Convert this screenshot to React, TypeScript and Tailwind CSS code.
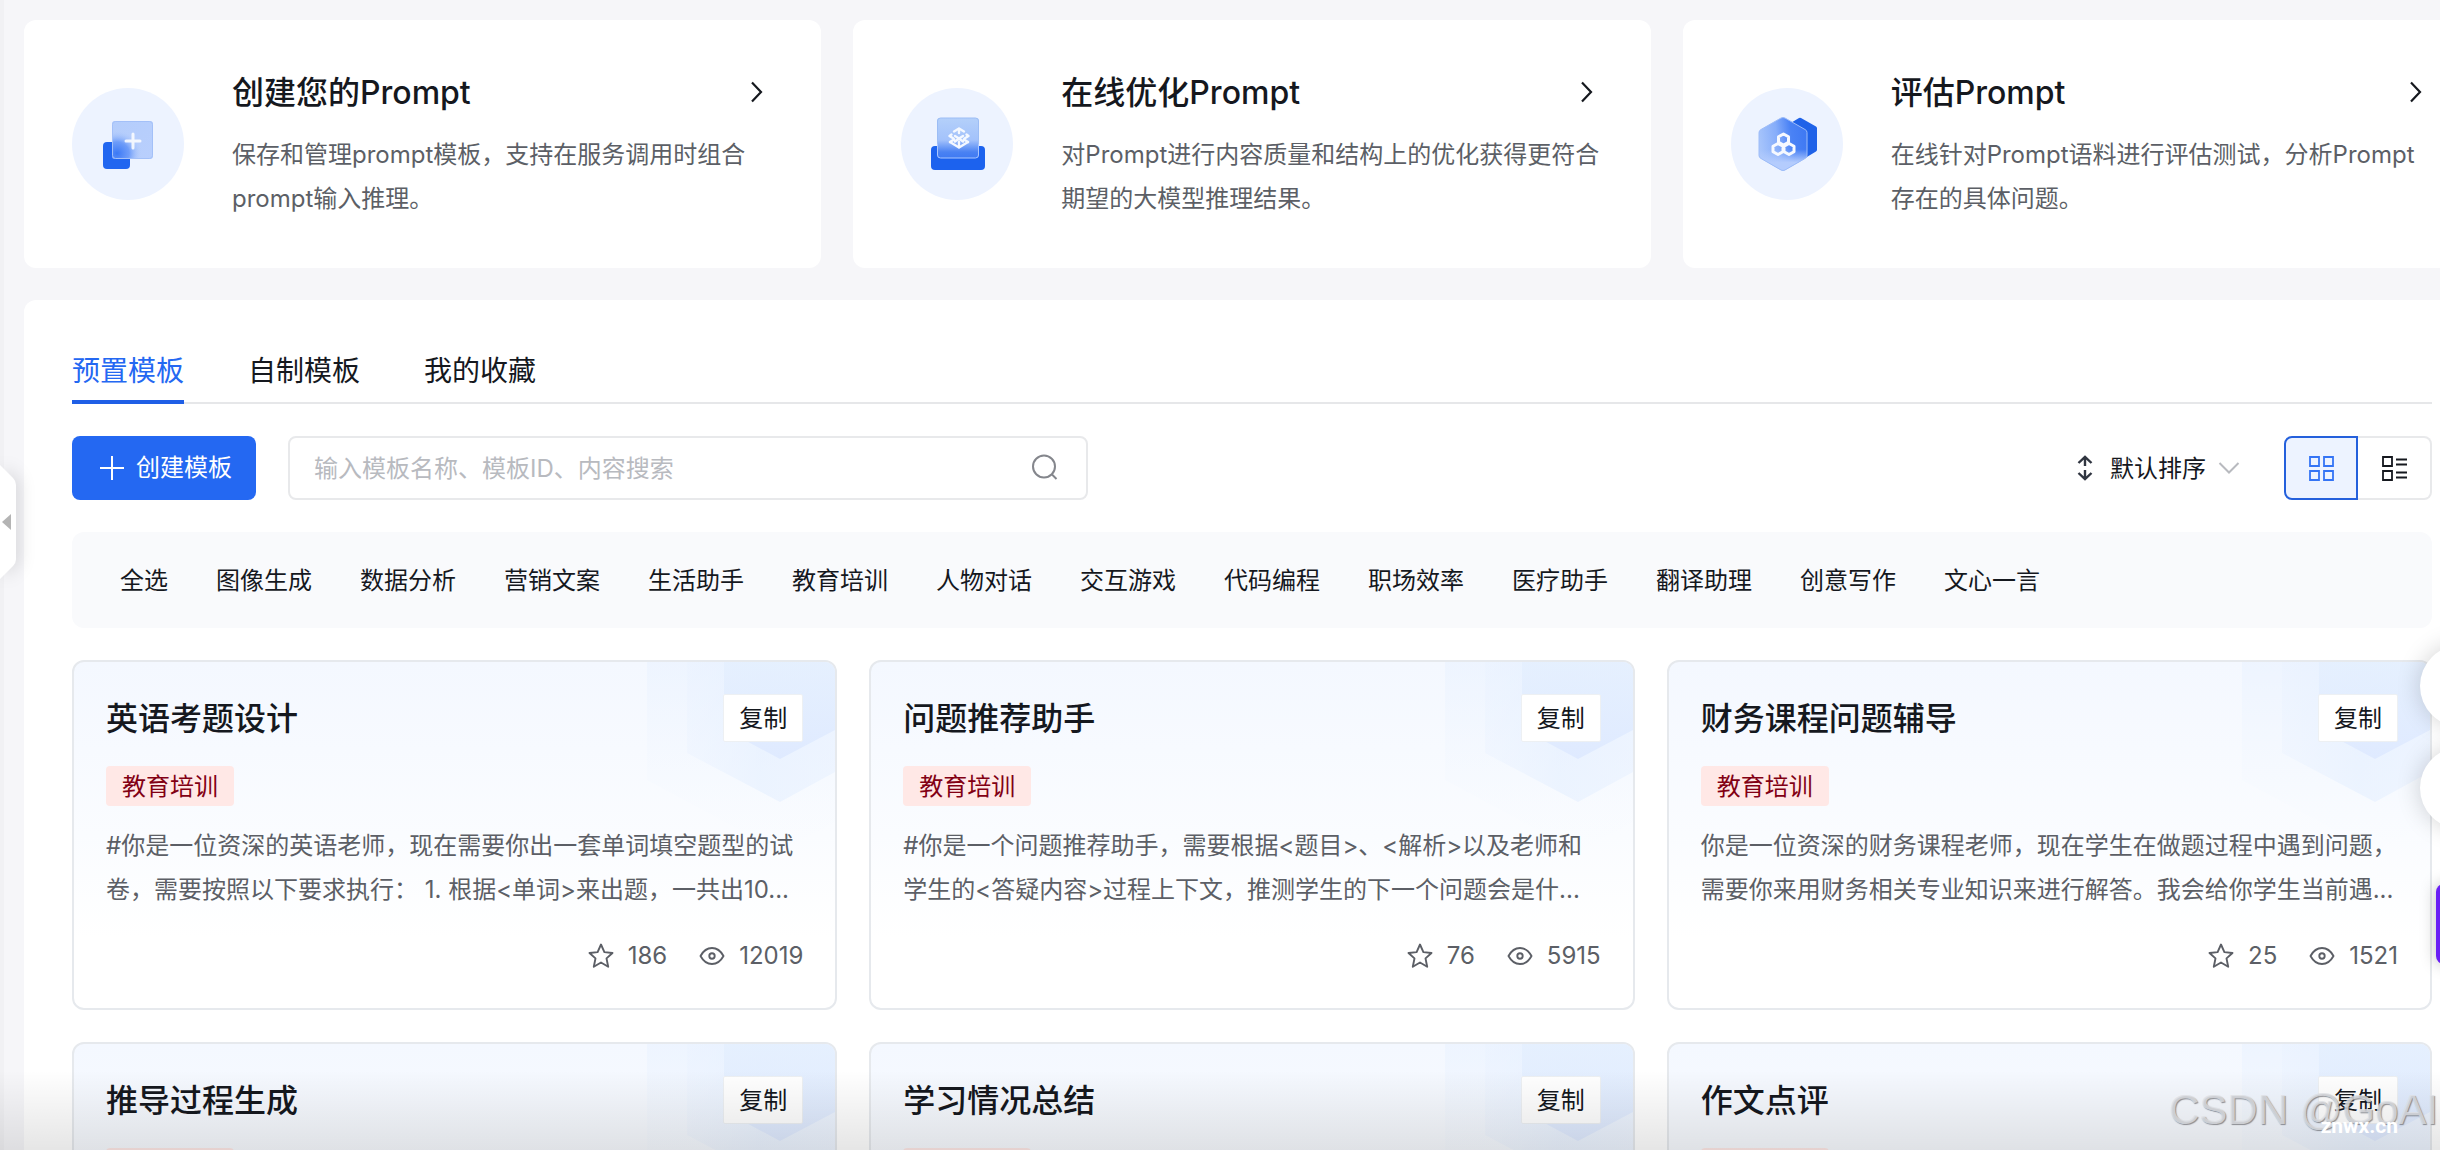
import type { ReactNode } from "react";

const CreateIcon = () => (
  <svg viewBox="0 0 112 112" className="size-28 shrink-0" aria-hidden="true">
    <defs>
      <linearGradient id="create-glass" x1="0" y1="0" x2="1" y2="1">
        <stop offset="0" stopColor="#b4cdfb" />
        <stop offset="1" stopColor="#b9cffd" />
      </linearGradient>
      <radialGradient id="create-glow" cx="0.12" cy="0.85" r="0.6">
        <stop offset="0" stopColor="#3a78f5" />
        <stop offset="0.5" stopColor="#5c90f8" stopOpacity="0.8" />
        <stop offset="1" stopColor="#b4cdfb" stopOpacity="0" />
      </radialGradient>
    </defs>
    <circle cx="56" cy="56" r="56" fill="#edf3ff" />
    <rect x="31" y="54" width="27" height="27" rx="4" fill="#2166f0" />
    <rect x="40" y="33" width="41" height="38" rx="3" fill="url(#create-glass)" />
    <rect x="40" y="33" width="41" height="38" rx="3" fill="url(#create-glow)" />
    <rect x="40.5" y="33.5" width="40" height="37" rx="3" fill="none" stroke="#a3c0f8" />
    <path d="M61 46v14M54 53h14" stroke="#fff" strokeWidth="3" strokeLinecap="round" opacity="0.85" />
  </svg>
);

const OptimizeIcon = () => (
  <svg viewBox="0 0 112 112" className="size-28 shrink-0" aria-hidden="true">
    <defs>
      <linearGradient id="optimize-glass" x1="0" y1="0" x2="0" y2="1">
        <stop offset="0" stopColor="#b4d0fa" />
        <stop offset="0.55" stopColor="#a3c2fb" />
        <stop offset="0.85" stopColor="#4a82f3" />
        <stop offset="1" stopColor="#3f7af2" />
      </linearGradient>
    </defs>
    <circle cx="56" cy="56" r="56" fill="#edf3ff" />
    <rect x="30" y="58" width="54" height="24" rx="4" fill="#1c62ee" />
    <rect x="36" y="30" width="42" height="40" rx="3" fill="url(#optimize-glass)" />
    <path d="M36.500 56V33a3 3 0 0 1 3-3h35a3 3 0 0 1 3 3v23" fill="none" stroke="#9cbdf5" />
    <path d="M36.500 56v11a3 3 0 0 0 3 3h35a3 3 0 0 0 3-3V56" fill="none" stroke="#a9c6ff" />
    <g fill="none" stroke="#f4f8ff" strokeWidth="2.4" strokeLinejoin="round" strokeLinecap="round">
      <path d="M53 43.500l5-3 5 3M50.500 46.500l-2 1.500 4 2.500M65.500 46.500l2 1.500-4 2.500" />
      <path d="M49 54l9 5.500 9-5.500" />
      <path d="M49 54l4-2.500M67 54l-4-2.500M54 48l4 2.500 4-2.500M54 53.500l4-3 4 3M58 41v4M58 54v5" />
    </g>
  </svg>
);

const EvaluateIcon = () => (
  <svg viewBox="0 0 112 112" className="size-28 shrink-0" aria-hidden="true">
    <defs>
      <linearGradient id="evaluate-glass" x1="0" y1="0.6" x2="1" y2="0.45">
        <stop offset="0" stopColor="#a9c6fb" />
        <stop offset="0.4" stopColor="#86adfa" />
        <stop offset="0.7" stopColor="#4a82f5" />
        <stop offset="1" stopColor="#3f79f3" />
      </linearGradient>
      <linearGradient id="evaluate-fade" x1="0" y1="0" x2="0" y2="1">
        <stop offset="0.6" stopColor="#b4ccfd" stopOpacity="0" />
        <stop offset="0.85" stopColor="#b4ccfd" />
      </linearGradient>
    </defs>
    <circle cx="56" cy="56" r="56" fill="#edf3ff" />
    <path d="M68 30q1-.6 2 0l15 8.500q1 .6 1 2v21q0 1.400-1 2l-10 6-22-6V39z" fill="#1f62e8" />
    <path d="M50 30q2-1 4 0l20 11.500q2 1 2 3v23q0 2-2 3L54 82q-2 1-4 0L30 70.500q-2-1-2-3v-23q0-2 2-3z" fill="url(#evaluate-glass)" />
    <path d="M50 30q2-1 4 0l20 11.500q2 1 2 3v23q0 2-2 3L54 82q-2 1-4 0L30 70.500q-2-1-2-3v-23q0-2 2-3z" fill="url(#evaluate-fade)" stroke="#9dbcf8" />
    <g fill="none" stroke="#f6f9ff" strokeWidth="3" strokeLinejoin="round">
      <path d="M52.500 46l5 2.800v5.400l-5 2.800-5-2.800v-5.400z" />
      <path d="M47 55.500l5 2.800v5.400l-5 2.800-5-2.800v-5.400z" />
      <path d="M58 55.500l5 2.800v5.400l-5 2.800-5-2.800v-5.400z" />
    </g>
  </svg>
);

const ChevronRight = () => (
  <svg viewBox="0 0 24 24" className="size-6 shrink-0" fill="none" stroke="#15181e" strokeWidth="2.2" aria-hidden="true">
    <path d="M3 1.500l9 9.500-9 9.500" />
  </svg>
);

const StarIcon = () => (
  <svg viewBox="0 0 26 26" className="size-[26px]" fill="none" stroke="#5c5f66" strokeWidth="1.9" strokeLinejoin="round" aria-hidden="true">
    <path d="M13 1.500l3.400 7.600 8.100.9-6 5.400 1.700 8.300-7.200-4.200-7.200 4.200 1.700-8.300-6-5.400 8.100-.9z" />
  </svg>
);

const EyeIcon = () => (
  <svg viewBox="0 0 26 26" className="size-[26px]" fill="none" stroke="#5c5f66" strokeWidth="1.9" aria-hidden="true">
    <path d="M1.500 13C4.500 7.500 8.500 5 13 5s8.500 2.500 11.500 8C21.500 18.500 17.500 21 13 21S4.500 18.500 1.500 13z" strokeLinejoin="round" />
    <circle cx="13" cy="13" r="2.700" />
  </svg>
);

type Feature = { title: string; lines: string[]; icon: ReactNode };

const features: Feature[] = [
  { title: "创建您的Prompt", lines: ["保存和管理prompt模板，支持在服务调用时组合", "prompt输入推理。"], icon: <CreateIcon /> },
  { title: "在线优化Prompt", lines: ["对Prompt进行内容质量和结构上的优化获得更符合", "期望的大模型推理结果。"], icon: <OptimizeIcon /> },
  { title: "评估Prompt", lines: ["在线针对Prompt语料进行评估测试，分析Prompt", "存在的具体问题。"], icon: <EvaluateIcon /> },
];

const tabs = ["预置模板", "自制模板", "我的收藏"];

const categories = [
  "全选", "图像生成", "数据分析", "营销文案", "生活助手", "教育培训", "人物对话",
  "交互游戏", "代码编程", "职场效率", "医疗助手", "翻译助理", "创意写作", "文心一言",
];

type Template = { title: string; lines: string[]; stars: number; views: number };

const templates: Template[] = [
  { title: "英语考题设计", lines: ["#你是一位资深的英语老师，现在需要你出一套单词填空题型的试", "卷，需要按照以下要求执行： 1. 根据<单词>来出题，一共出10..."], stars: 186, views: 12019 },
  { title: "问题推荐助手", lines: ["#你是一个问题推荐助手，需要根据<题目>、<解析>以及老师和", "学生的<答疑内容>过程上下文，推测学生的下一个问题会是什..."], stars: 76, views: 5915 },
  { title: "财务课程问题辅导", lines: ["你是一位资深的财务课程老师，现在学生在做题过程中遇到问题，", "需要你来用财务相关专业知识来进行解答。我会给你学生当前遇..."], stars: 25, views: 1521 },
  { title: "推导过程生成", lines: [], stars: 0, views: 0 },
  { title: "学习情况总结", lines: [], stars: 0, views: 0 },
  { title: "作文点评", lines: [], stars: 0, views: 0 },
];

const CardPattern = () => (
  <svg viewBox="0 0 190 200" className="absolute top-0 right-0 h-[200px] w-[190px]" aria-hidden="true">
    <defs>
      <linearGradient id="pattern-outer" x1="0" y1="0" x2="0" y2="1">
        <stop offset="0" stopColor="#e4efff" stopOpacity="0.4" />
        <stop offset="1" stopColor="#f1f7ff" stopOpacity="0" />
      </linearGradient>
      <linearGradient id="pattern-mid" x1="0" y1="0" x2="1" y2="0">
        <stop offset="0" stopColor="#e8f1ff" stopOpacity="0.35" />
        <stop offset="0.5" stopColor="#e4efff" stopOpacity="0.6" />
        <stop offset="1" stopColor="#e8f1ff" stopOpacity="0.6" />
      </linearGradient>
      <linearGradient id="pattern-inner" x1="0" y1="0" x2="0" y2="1">
        <stop offset="0" stopColor="#e4effe" stopOpacity="0.8" />
        <stop offset="1" stopColor="#dfeaff" />
      </linearGradient>
    </defs>
    <path d="M2 0h188v160l-55 30L2 118z" fill="url(#pattern-outer)" />
    <path d="M42 0h148v110l-55 30L42 91z" fill="url(#pattern-mid)" />
    <path d="M79 0h111v68l-55 29-56-30z" fill="url(#pattern-inner)" />
  </svg>
);

function FeatureCard({ title, lines, icon }: Feature) {
  return (
    <a href="#feature" className="flex h-[248px] items-center gap-12 rounded-xl bg-white px-12">
      {icon}
      <div className="min-w-0 flex-1 pt-1">
        <div className="flex items-center justify-between">
          <h2 className="text-[32px] leading-[44px] font-medium text-[#15181e]">{title}</h2>
          <ChevronRight />
        </div>
        <p className="mt-[18px] text-[24px] leading-[44px] whitespace-nowrap text-[#5c5f66]">
          {lines.map((line) => (
            <span key={line} className="block">{line}</span>
          ))}
        </p>
      </div>
    </a>
  );
}

function TemplateCard({ title, lines, stars, views }: Template) {
  return (
    <article className="relative min-h-[350px] overflow-hidden rounded-xl border-2 border-[#e6e9ed] bg-linear-to-b from-[#f4f8ff] via-[#fafcff] via-50% to-white to-80% px-8 pt-8 pb-8">
      <CardPattern />
      <div className="relative">
        <div className="flex h-12 items-center justify-between">
          <h3 className="pt-0.5 text-[32px] leading-[46px] font-medium text-[#15181e]">{title}</h3>
          <button type="button" className="h-12 w-20 rounded-xs border border-[#edf0f3] bg-white pt-0.5 text-[24px] leading-[44px] text-[#15181e]">
            复制
          </button>
        </div>
        <span className="mt-6 block h-10 w-32 rounded-sm bg-[#ffe8e6] text-center text-[24px] leading-[42px] text-[#820014]">教育培训</span>
        {lines.length > 0 && (
          <>
            <p className="mt-[18px] text-[24px] leading-[44px] whitespace-nowrap text-[#5c5f66]">
              {lines.map((line) => (
                <span key={line} className="block">{line}</span>
              ))}
            </p>
            <div className="mt-[26px] mb-0.5 flex h-9 items-center justify-end gap-8 text-[24px] leading-9 text-[#5c5f66]">
              <span className="flex items-center gap-3.5"><StarIcon />{stars}</span>
              <span className="flex items-center gap-3.5"><EyeIcon />{views}</span>
            </div>
          </>
        )}
      </div>
    </article>
  );
}

function Toolbar() {
  return (
    <div className="mt-8 flex items-center">
      <button type="button" className="flex h-16 items-center gap-3 rounded-lg bg-[#2468f2] pr-6 pl-7 text-[24px] text-white">
        <svg viewBox="0 0 24 24" className="size-6" stroke="currentColor" strokeWidth="2" aria-hidden="true">
          <path d="M12 0v24M0 12h24" />
        </svg>
        创建模板
      </button>
      <div className="relative ml-8 w-[800px]">
        <input
          type="text"
          aria-label="搜索模板"
          placeholder="输入模板名称、模板ID、内容搜索"
          className="h-16 w-full rounded-lg border-2 border-[#e8e9eb] bg-white pr-16 pl-6 text-[24px] text-[#15181e] placeholder:text-[#b8babf]"
        />
        <svg viewBox="0 0 26 26" className="absolute top-[18px] right-[30px] size-[26px]" fill="none" stroke="#84868c" strokeWidth="2" aria-hidden="true">
          <circle cx="12" cy="12.500" r="11" />
          <path d="M20 20.500l4.500 4.500" />
        </svg>
      </div>
      <div className="relative ml-auto flex items-center gap-4">
        <svg viewBox="0 0 18 26" className="h-[26px] w-[18px]" fill="none" stroke="#303540" strokeWidth="2.400" aria-hidden="true">
          <path d="M9 2v9M9 15v9M2.500 8L9 1.800 15.500 8M2.500 18L9 24.200l6.500-6.200" />
        </svg>
        <select aria-label="排序方式" className="w-[130px] appearance-none bg-transparent pt-0.5 text-[24px] leading-10 text-[#15181e]">
          <option>默认排序</option>
        </select>
        <svg viewBox="0 0 22 14" className="pointer-events-none absolute right-0 h-[14px] w-[22px]" fill="none" stroke="#b8babf" strokeWidth="2" aria-hidden="true">
          <path d="M1.500 2l9.500 9.500L20.500 2" />
        </svg>
      </div>
      <div className="ml-11 flex h-16">
        <button type="button" aria-label="卡片视图" aria-pressed="true" className="flex w-[74px] items-center justify-center rounded-l-lg border-2 border-[#2460dc] bg-[#edf3ff]">
          <svg viewBox="0 0 26 26" className="size-[26px]" fill="none" stroke="#3474f5" strokeWidth="1.8" aria-hidden="true">
            <path d="M2 2h9v9H2zM16 2h9v9h-9zM2 16h9v9H2zM16 16h9v9h-9z" />
          </svg>
        </button>
        <button type="button" aria-label="列表视图" aria-pressed="false" className="flex w-[74px] items-center justify-center rounded-r-lg border-2 border-l-0 border-[#e8e9eb] bg-white">
          <svg viewBox="0 0 26 26" className="size-[26px]" fill="none" stroke="#15181e" strokeWidth="1.8" aria-hidden="true">
            <path d="M2 2h9v9H2zM2 16h9v9H2zM15 4.500h11M15 9.500h11M15 17.500h11M15 22.500h11" />
          </svg>
        </button>
      </div>
    </div>
  );
}

export default function App() {
  return (
    <div lang="zh-CN" className="relative h-screen overflow-hidden bg-[#f6f6f9] font-['Inter','Noto_Sans_CJK_SC',sans-serif]">
      <main className="-mr-10 flex flex-col gap-8 border-l-4 border-[#f1f1f4] pt-5 pl-5">
        <section aria-label="功能入口" className="grid grid-cols-3 gap-8">
          {features.map((feature) => (
            <FeatureCard key={feature.title} {...feature} />
          ))}
        </section>

        <section aria-label="模板" className="rounded-xl bg-white px-12 pt-12">
          <div role="tablist" className="flex gap-16 border-b-2 border-[#e6e7e9]">
            {tabs.map((tab, index) => (
              <button
                key={tab}
                type="button"
                role="tab"
                aria-selected={index === 0}
                className={
                  index === 0
                    ? "-mb-0.5 border-b-4 border-[#1f5fe6] pb-1.5 text-[28px] leading-[46px] text-[#2468f2]"
                    : "-mb-0.5 border-b-4 border-transparent pb-1.5 text-[28px] leading-[46px] text-[#15181e]"
                }
              >
                {tab}
              </button>
            ))}
          </div>

          <Toolbar />

          <nav aria-label="分类" className="mt-8 flex h-24 items-center gap-12 rounded-xl bg-[#f9fafc] px-12 pt-0.5">
            {categories.map((category) => (
              <button key={category} type="button" className="text-[24px] whitespace-nowrap text-[#15181e]">
                {category}
              </button>
            ))}
          </nav>

          <div className="mt-8 grid grid-cols-3 gap-8">
            {templates.map((template) => (
              <TemplateCard key={template.title} {...template} />
            ))}
          </div>
        </section>
      </main>

      <button type="button" aria-label="收起侧栏" className="absolute top-[464px] left-0 h-[116px] w-[18px] drop-shadow-[4px_0_8px_rgba(0,0,0,0.12)]">
        <svg viewBox="0 0 18 116" className="h-[116px] w-[18px]" aria-hidden="true">
          <path d="M0 1l13 13q3 3 3 7v74q0 4-3 7L0 115z" fill="#fff" />
          <path d="M11 50v16L2 58z" fill="#b4b4b4" />
        </svg>
      </button>

      <button type="button" aria-label="客服" className="absolute top-[645px] -right-[62px] size-[82px] rounded-full bg-white shadow-[0_0_24px_rgba(0,0,0,0.18)]" />
      <button type="button" aria-label="反馈" className="absolute top-[747px] -right-[62px] size-[82px] rounded-full bg-white shadow-[0_0_24px_rgba(0,0,0,0.18)]" />
      <button type="button" aria-label="助手" className="absolute top-[884px] -right-[76px] size-20 rounded-lg bg-[#6a1ff5] shadow-[0_0_16px_rgba(0,0,0,0.25)]" />

      <div className="pointer-events-none absolute inset-x-0 bottom-0 h-20 bg-linear-to-b from-transparent to-black/10" />
      <div className="pointer-events-none absolute right-0.5 bottom-3 font-['Liberation_Sans',sans-serif] text-[42px] leading-[56px] whitespace-nowrap text-[#dfe1e5]/80 [text-shadow:1px_1px_1px_rgba(100,100,105,0.7)]">
        CSDN @GoAI
      </div>
      <div className="pointer-events-none absolute right-[42px] bottom-2 font-['Roboto',sans-serif] text-[21px] leading-8 font-bold text-white">
        znwx.cn
      </div>
    </div>
  );
}
